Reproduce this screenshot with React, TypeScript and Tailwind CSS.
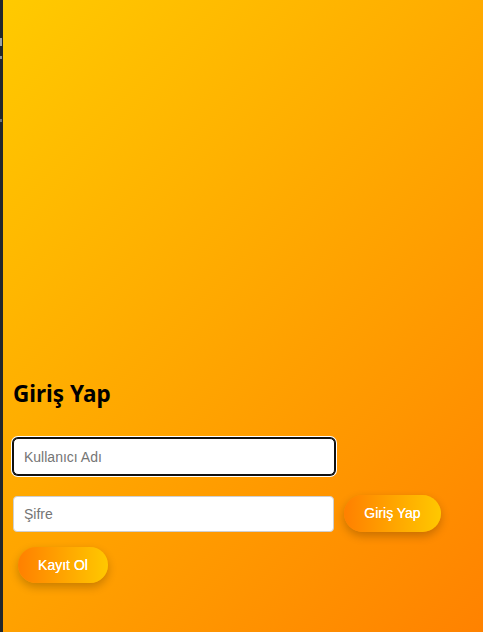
import { useEffect, useRef } from "react";

const App = () => {
  const userRef = useRef<HTMLInputElement>(null);

  useEffect(() => {
    userRef.current?.focus();
  }, []);

  return (
    <div className="flex h-[632px] w-full overflow-hidden font-['Liberation_Sans',Arial,sans-serif]">
      {/* cut-off sidebar */}
      <div className="flex w-[3px] shrink-0 flex-col bg-[#23272b]">
        <div className="mt-[38px] h-[8px] w-[2px] bg-[#9aa0a6]" />
        <div className="mt-[10px] h-[3px] w-[2px] bg-[#8a9096]" />
        <div className="mt-[60px] h-[3px] w-[2px] bg-[#6b7177]" />
      </div>

      <div className="flex flex-1 flex-col justify-end bg-[linear-gradient(135deg,#ffca00_0%,#ffa600_50%,#ff8200_100%)] pb-[49px] pl-[10px]">
        <h2 className="mb-[29px] font-['Noto_Sans',sans-serif] text-[22.5px] font-bold leading-[30px] text-black">
          Giriş Yap
        </h2>

        <input
          ref={userRef}
          type="text"
          placeholder="Kullanıcı Adı"
          className="h-[37px] w-[322px] rounded-[5px] border border-[#cfcfcf] bg-white px-[10px] text-[14px] text-black outline-none placeholder:text-[#757575] focus:border-[#101010] focus:shadow-[0_0_0_1px_#101010,0_0_0_2px_#ffffff]"
        />

        <div className="mt-[20px] flex items-center">
          <input
            type="password"
            placeholder="Şifre"
            className="h-[36px] w-[321px] rounded-[4px] border border-[#cfcfcf] bg-white px-[10px] text-[14px] text-black outline-none placeholder:text-[#757575]"
          />
          <button className="ml-[10px] h-[37px] w-[97px] rounded-full bg-[linear-gradient(to_right,#ff8000,#ffc800)] text-[14px] text-white shadow-[0_4px_10px_rgba(0,0,0,0.22)] [text-shadow:0_0_0.4px_#fff]">
            Giriş Yap
          </button>
        </div>

        <div className="mt-[15px] pl-[5px]">
          <button className="h-[36px] w-[90px] rounded-full bg-[linear-gradient(to_right,#ff8000,#ffc800)] text-[14px] text-white shadow-[0_4px_10px_rgba(0,0,0,0.22)] [text-shadow:0_0_0.4px_#fff]">
            Kayıt Ol
          </button>
        </div>
      </div>
    </div>
  );
};

export default App;
